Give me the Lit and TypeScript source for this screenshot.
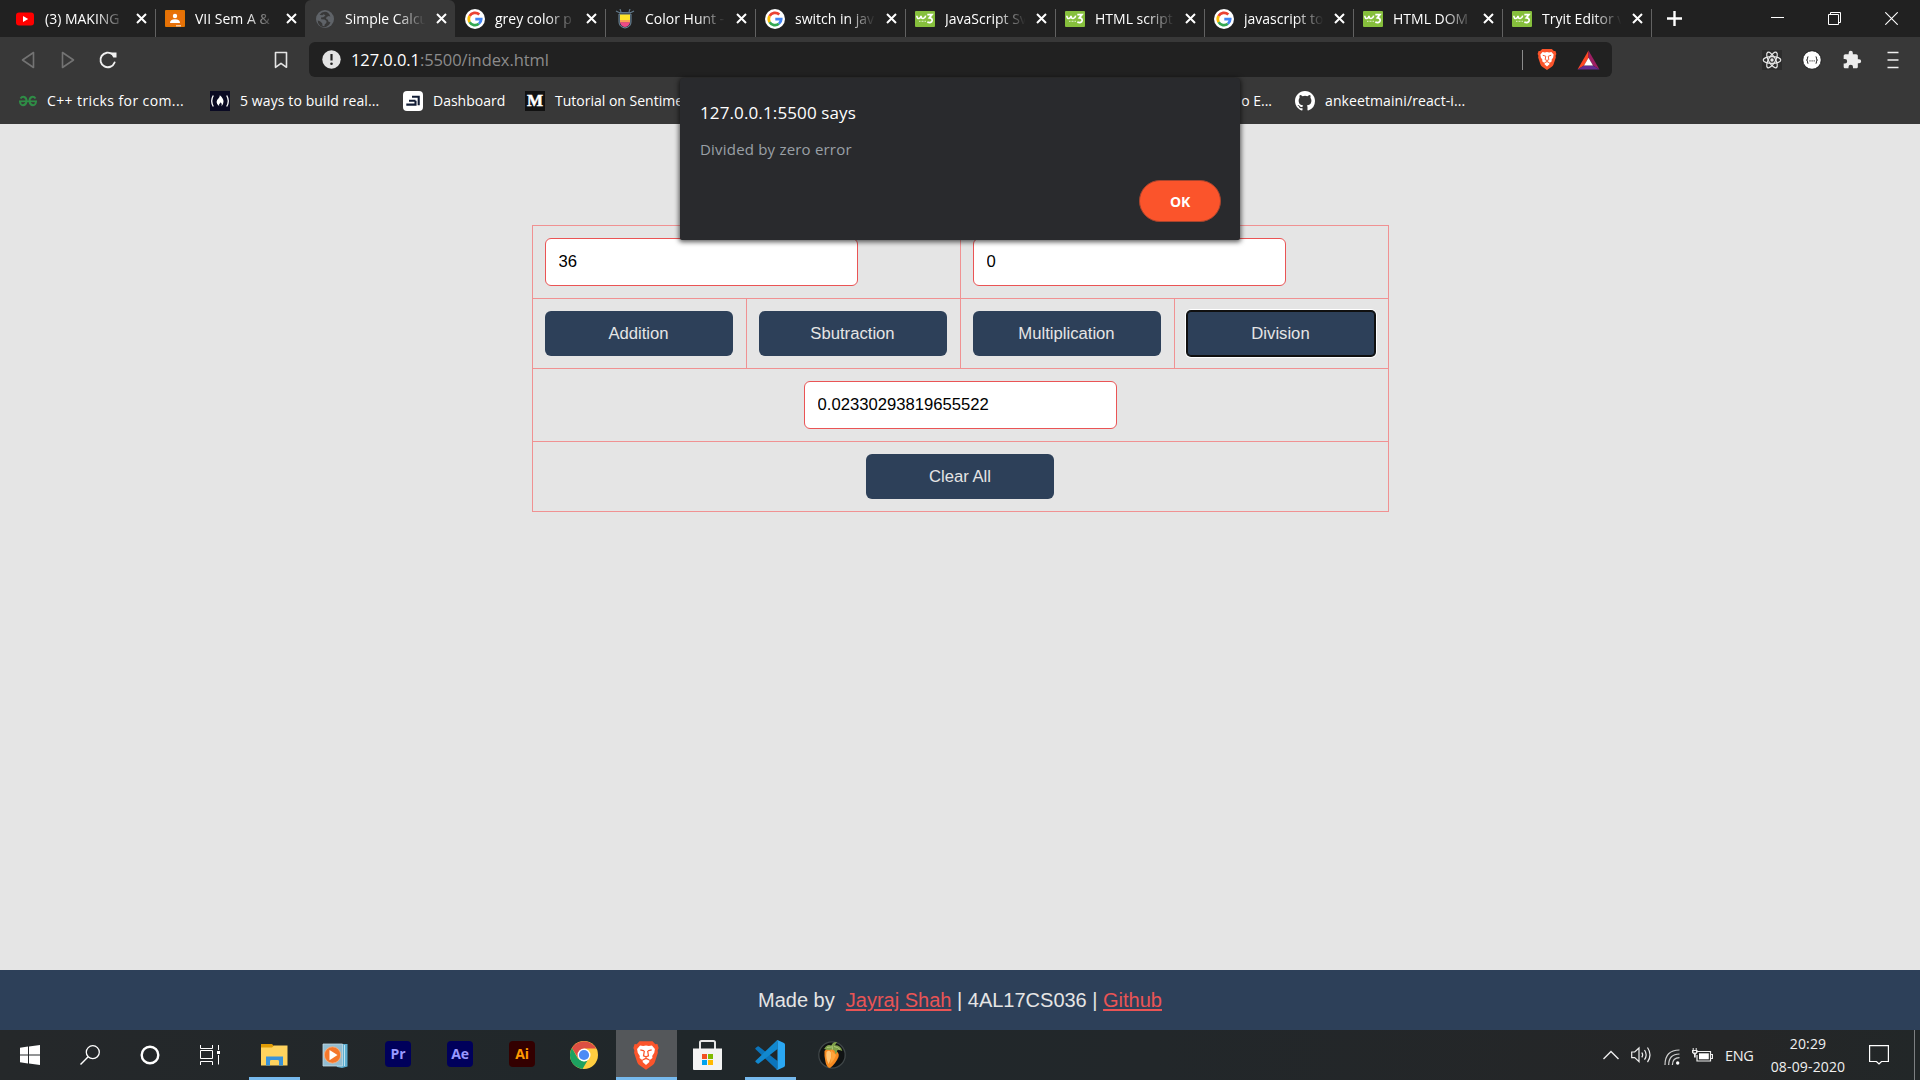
import { LitElement, html, svg, css, nothing } from "lit";
import { customElement, property } from "lit/decorators.js";
import { classMap } from "lit/directives/class-map.js";

const lion = svg`
  <path fill="#fb542b" d="M5 1h10l2.200 2.200 1.600-.2 1 3.200-.8 2 .2 1.600-2.400 7.400q-.5 1.500-1.800 2.400L10 23l-5-3.400q-1.300-.9-1.800-2.400L.8 9.800 1 8.200l-.8-2L1.200 3l1.600.2z"/>
  <path fill="#fff" d="M10 4.200l2.200.4 2.400-.4 2.300 2.700-.5 3-1.600 2.400.2 1.600-2.600 1.900.2 1.200L10 19.300 7.400 17l.2-1.200L5 13.900l.2-1.600-1.600-2.400-.5-3 2.300-2.700 2.400.4z"/>
  <path fill="none" stroke="#fb542b" stroke-width="1" d="M5.600 7.600l3 .9M14.400 7.600l-3 .9M8.700 8.500l-.6 3.700 1.900.8 1.900-.8-.6-3.700M10 13v1.400M7.300 15.500L10 14.200l2.700 1.300"/>`;

const icons: Record<string, unknown> = {
  youtube: svg`<svg width="20" height="20" viewBox="0 0 20 20"><rect x="1" y="3.400" width="18" height="13.200" rx="3" fill="#f00"/><path d="M8 7v6l5.200-3z" fill="#fff"/></svg>`,
  classroom: svg`<svg width="20" height="20" viewBox="0 0 20 20"><rect y="1" width="20" height="17" rx="1" fill="#e37400"/><rect x="1.500" y="2.500" width="17" height="14" fill="#e8710a"/><circle cx="10" cy="7" r="2.200" fill="#fff"/><path d="M5 14q0-3.700 5-3.700t5 3.700z" fill="#fff"/><path d="M11 16h5v1.500h-5z" fill="#f5c9a0"/></svg>`,
  globe: svg`<svg width="20" height="20" viewBox="0 0 20 20"><circle cx="10" cy="10" r="9" fill="#5f6368"/><path fill="#383838" d="M10 2.800Q6.500 3 4.600 5.800l2.600.4 1.500-.9 1.800 1.200-2.200 1.700-2.300.2.200 1.800 3.300.2 2 1.600-.2 2-1.500 1.300-.5 1.900-1.800-.4-.3-2.600-2.200-2-2.300-.8q-.2 3.300 2.200 5.300 2.600 2 6 1.200 3.300-1 4.600-4.400l-2.200-1-.4-1.700-1.800-.8.400-2 2.200-1.100 1.700.600Q13.800 2.900 10 2.800z"/></svg>`,
  google: svg`<svg width="20" height="20" viewBox="0 0 20 20"><circle cx="10" cy="10" r="10" fill="#fff"/><g fill="none" stroke-width="2.700"><path stroke="#ea4335" d="M14.300 5.500A6.200 6.200 0 0 0 4.600 7"/><path stroke="#fbbc05" d="M4.600 7a6.200 6.200 0 0 0 0 6.100"/><path stroke="#34a853" d="M4.600 13.100a6.200 6.200 0 0 0 9.300 1.700"/><path stroke="#4285f4" d="M13.900 14.800A6.200 6.200 0 0 0 16.200 10.100H10.300"/></g></svg>`,
  hunt: svg`<svg width="20" height="20" viewBox="0 0 20 20"><path d="M4 5h12v8q0 5-6 6-6-1-6-6z" fill="#263746" stroke="#718b9c" stroke-width="1"/><path d="M5 5.500h10V12H5z" fill="#ffe52b"/><path d="M5 11h10v2.600H5z" fill="#f9a055"/><path d="M5 13.300h10q-.7 4-5 4.700-4.300-.7-5-4.700z" fill="#ef4b86"/><path d="M1 2l3 1.500M19 2l-3 1.500M5 0l1 3M15 0l-1 3M4 3.500h12" stroke="#61798a" stroke-width="1.200"/></svg>`,
  w3: svg`<svg width="20" height="20" viewBox="0 0 20 20"><rect y="2" width="20" height="16" rx="1" fill="#86bf3c"/><path d="M1.800 6.700q.3 3.200 2.200 2.800T6 6.900q.2 2.900 2.200 2.600t2.500-2.800" fill="none" stroke="#fff" stroke-width="1.600"/><path d="M12.300 5.700h4.600l-2.500 3.100q3 .2 2.700 2.900-.8 2.800-4.800 1.500" fill="none" stroke="#fff" stroke-width="1.800"/><path d="M4 12.300h7" stroke="#cfe6ae" stroke-width="1.200" stroke-dasharray="1 .5"/></svg>`,
  back: svg`<svg width="16" height="20" viewBox="0 0 16 20"><path d="M13.500 2.500v15L2.500 10z" fill="none" stroke="#737373" stroke-width="1.600" stroke-linejoin="round"/></svg>`,
  forward: svg`<svg width="16" height="20" viewBox="0 0 16 20"><path d="M2.500 2.500v15L13.500 10z" fill="none" stroke="#737373" stroke-width="1.600" stroke-linejoin="round"/></svg>`,
  reload: svg`<svg width="20" height="20" viewBox="0 0 20 20"><path d="M14.500 4.400A7.300 7.300 0 1 0 16.600 12.500" fill="none" stroke="#f0f0f0" stroke-width="1.900" stroke-linecap="round"/><path d="M12.500 2.400h6v5.100h-3.200z" fill="#f0f0f0"/></svg>`,
  bookmark: svg`<svg width="14" height="18" viewBox="0 0 14 18"><path d="M1.500 1.500h11v14.800L7 12.300l-5.500 4z" fill="none" stroke="#e4e4e4" stroke-width="1.600" stroke-linejoin="round"/></svg>`,
  info: svg`<svg width="19" height="19" viewBox="0 0 19 19"><circle cx="9.500" cy="9.500" r="9.200" fill="#e3e3e3"/><path d="M9.500 4v6.500" stroke="#222" stroke-width="2.200"/><circle cx="9.500" cy="13.700" r="1.300" fill="#222"/></svg>`,
  brave: svg`<svg width="20" height="23" viewBox="0 0 20 24">${lion}</svg>`,
  braveBig: svg`<svg width="26" height="31" viewBox="0 0 20 24">${lion}</svg>`,
  bat: svg`<svg width="23" height="20" viewBox="0 0 23 20"><path d="M11.500.5L.5 19.500l6.500-4 4.500-7.800z" fill="#ff4724"/><path d="M11.500.5l11 19-6.500-4-4.500-7.800z" fill="#9e1f63"/><path d="M.5 19.500h22l-6.500-4H7z" fill="#662d91"/><path d="M11.500 7.700L16 15.500H7z" fill="#fff"/></svg>`,
  react: svg`<svg width="20" height="20" viewBox="0 0 20 20"><rect width="20" height="20" fill="#2c2c2c"/><g fill="none" stroke="#e6e6e6" stroke-width="1.200"><ellipse cx="10" cy="10" rx="8.800" ry="3.400"/><ellipse cx="10" cy="10" rx="8.800" ry="3.400" transform="rotate(60 10 10)"/><ellipse cx="10" cy="10" rx="8.800" ry="3.400" transform="rotate(120 10 10)"/></g><circle cx="10" cy="10" r="1.700" fill="#e6e6e6"/></svg>`,
  json: svg`<svg width="20" height="20" viewBox="0 0 20 20"><circle cx="10" cy="10" r="9.300" fill="#fff" stroke="#1b1b1b" stroke-width="1"/><path d="M6.500 6.800q-1.200 0-1 1.500T4.100 10q1.600.2 1.400 1.700t1 1.500M13.500 6.800q1.200 0 1 1.500t1.400 1.700q-1.600.2-1.400 1.700t-1 1.500" fill="none" stroke="#444" stroke-width="1.100"/><path d="M7.400 10.800h5.400" stroke="#555" stroke-width="1.200" stroke-dasharray="1.200 .9"/></svg>`,
  puzzle: svg`<svg width="20" height="20" viewBox="0 0 24 24"><path fill="#ececec" d="M20.500 11H19V7c0-1.100-.9-2-2-2h-4V3.500a2.500 2.500 0 0 0-5 0V5H4c-1.100 0-1.990.9-1.990 2v3.800H3.500a2.700 2.700 0 0 1 0 5.400H2V20c0 1.100.9 2 2 2h3.800v-1.500a2.700 2.700 0 0 1 5.400 0V22H17c1.100 0 2-.9 2-2v-4h1.500a2.500 2.500 0 0 0 0-5z"/></svg>`,
  menu: svg`<svg width="12" height="18" viewBox="0 0 12 18"><path d="M.5 1.500h11M.5 9h11M.5 16.500h11" stroke="#f0f0f0" stroke-width="1.600"/></svg>`,
  gfg: svg`<svg width="20" height="20" viewBox="0 0 20 20"><g fill="none" stroke="#2f8d46" stroke-width="1.900"><path d="M2.500 7.600Q4 5.300 6.300 6 8.800 7 8.500 10.500 8 14 5 14.200 2.200 14 2 10.500"/><path d="M17.500 7.600Q16 5.300 13.700 6 11.200 7 11.500 10.500 12 14 15 14.200q2.800-.2 3-3.700"/><path d="M1 10.300h18" stroke-width="1.700"/></g></svg>`,
  fcc: svg`<svg width="20" height="20" viewBox="0 0 20 20"><rect width="20" height="20" fill="#0a0a23"/><path d="M3.300 4.500q-3.200 5.500 0 11M16.700 4.500q3.200 5.500 0 11" fill="none" stroke="#fff" stroke-width="1.300"/><path fill="#fff" d="M9.800 4.200q3.800 3.200 3.700 6.400 0 2.600-2 4.600.8-2.600-.7-4-.6 1.300-1.500 1.700-.6 1 0 2.300-2.700-1.400-2.700-4.200 0-2.300 2-3.800 1.200-1.100 1.200-3z"/></svg>`,
  dash: svg`<svg width="20" height="20" viewBox="0 0 20 20"><rect width="20" height="20" rx="4" fill="#fff"/><path d="M9 5.800h6.700v8.400M6 9.700h6.500M3.300 13.600h9.200V9.700" fill="none" stroke="#111c35" stroke-width="2.100"/></svg>`,
  medium: html`<span class="medium">M</span>`,
  github: svg`<svg width="20" height="20" viewBox="0 0 16 16"><path fill="#fff" d="M8 0C3.580 0 0 3.580 0 8c0 3.540 2.290 6.530 5.470 7.590.4.070.55-.17.55-.38 0-.19-.01-.82-.01-1.490-2.010.37-2.530-.49-2.690-.94-.09-.23-.48-.94-.82-1.130-.28-.15-.68-.52-.01-.53.63-.01 1.080.58 1.230.82.72 1.210 1.870.87 2.330.66.070-.52.280-.87.510-1.070-1.780-.2-3.640-.89-3.640-3.950 0-.87.310-1.590.82-2.150-.08-.2-.36-1.020.08-2.120 0 0 .67-.21 2.200.82a7.640 7.640 0 0 1 4 0c1.530-1.040 2.200-.82 2.200-.82.44 1.100.16 1.920.08 2.120.51.560.82 1.270.82 2.150 0 3.070-1.870 3.750-3.650 3.950.29.25.54.73.54 1.480 0 1.070-.01 1.930-.01 2.200 0 .21.150.46.550.38A8.010 8.010 0 0 0 16 8c0-4.420-3.580-8-8-8z"/></svg>`,
  windows: svg`<svg width="20" height="20" viewBox="0 0 20 20"><path fill="#fff" d="M0 2.700l8-1.100v7.900H0zM9 1.500L20 0v9.500H9zM0 10.500h8v7.900l-8-1.100zM9 10.500h11V20L9 18.500z"/></svg>`,
  search: svg`<svg width="20" height="20" viewBox="0 0 20 20"><circle cx="12.800" cy="7.200" r="6.500" fill="none" stroke="#fff" stroke-width="1.300"/><path d="M8.200 11.800L.5 19.500" stroke="#fff" stroke-width="1.400"/></svg>`,
  cortana: svg`<svg width="20" height="20" viewBox="0 0 20 20"><circle cx="10" cy="10" r="8.300" fill="none" stroke="#fff" stroke-width="2.400"/></svg>`,
  taskview: svg`<svg width="20" height="20" viewBox="0 0 20 20"><g fill="none" stroke="#fff"><path d="M.5 0v3.500h12V0M.5 20v-3.500h12V20M.5 5.500h12v8H.500z"/><path d="M18.500 0v5M18.500 10v9.500"/></g><path d="M17 6h3v3h-3z" fill="#fff"/></svg>`,
  explorer: svg`<svg width="27" height="24" viewBox="0 0 27 24"><path d="M0 1h11l2 2v3H0z" fill="#e09b05"/><path d="M0 4.500h11l2-2h13.500V22.500H0z" fill="#ffd35e"/><path d="M5 13.500h17v9h-4v-4.200q0-1.300-1.300-1.300h-6.400Q9 17 9 18.300v4.200H5z" fill="#3a93d9"/></svg>`,
  player: svg`<svg width="26" height="25" viewBox="0 0 26 25"><path d="M6 1h19.500v22.500L20 25l-5-1z" fill="#5eaed0"/><path d="M22.500 2v21" stroke="#c1e5f2"/><path d="M1 1h19.500v22H1z" fill="#93bdd1" stroke="#c3dbe5" stroke-width=".8"/><circle cx="10.500" cy="12" r="8.200" fill="#f4772b" stroke="#f9b98b" stroke-width=".8"/><path d="M7.500 7v10.200l8-5.100z" fill="#fff"/></svg>`,
  chrome: svg`<svg width="28" height="28" viewBox="0 0 28 28"><circle cx="14" cy="14" r="14" fill="#ffcd40"/><path d="M1.900 7A14 14 0 0 1 26.100 7.500H14L8.400 17.300z" fill="#dd4f43"/><path d="M1.900 7l6 10.500L14 20.500l3.500-1L12.500 28A14 14 0 0 1 1.900 7z" fill="#1da160"/><circle cx="14" cy="14" r="6.500" fill="#fff"/><circle cx="14" cy="14" r="5.100" fill="#4c8bf5"/></svg>`,
  store: svg`<svg width="29" height="30" viewBox="0 0 29 30"><path d="M7 9V2.500Q7 1 8.500 1h12Q22 1 22 2.500V9" fill="none" stroke="#e6e6e6" stroke-width="2"/><path d="M0 8.500h29V29q0 1-1 1H1q-1 0-1-1z" fill="#f3f3f3"/><path d="M9 14h5v5H9z" fill="#f25022"/><path d="M15 14h5v5h-5z" fill="#7fba00"/><path d="M9 20h5v5H9z" fill="#00a4ef"/><path d="M15 20h5v5h-5z" fill="#ffb900"/></svg>`,
  vscode: svg`<svg width="30" height="30" viewBox="0 0 30 30"><path d="M.600 9.300Q0 8.700.600 8.100L2.500 6.600q.700-.500 1.300 0L22.500 21v8.600q-.700-.100-1.300-.700z" fill="#0b74bb"/><path d="M.600 20.700Q0 21.300.600 21.900l1.900 1.500q.700.500 1.300 0L22.500 9V.4q-.700.100-1.300.700z" fill="#1188cf"/><path d="M21.200.800Q22 0 23 .300L29 3.100q1 .500 1 1.600v20.600q0 1.100-1 1.600l-6 2.800q-1 .300-1.800-.5 1.300.3 1.300-1.200V2q0-1.500-1.300-1.200z" fill="#2aa7f3"/></svg>`,
  fl: svg`<svg width="28" height="28" viewBox="0 0 28 28"><circle cx="14" cy="14" r="13.200" fill="#101314" stroke="#3f4648" stroke-width="1.300"/><path d="M6.500 10Q10 5.500 16 8.500q6 3 4.500 7.500-3 7-8.500 11-3.500-.5-4.500-6-1.500-6-1-11z" fill="#f78a20"/><path d="M8.500 11q3-2.500 4.500.5 1 6-2.500 11.500Q7.500 17 8.500 11z" fill="#ffc677"/><path d="M13 9q1 6-1 14 4-3 6-9z" fill="#ffa63c"/><path d="M6.500 7.500Q9 2.500 13.500 4.500q1-4 5.500-3.500l-2 3.300q6 0 7.300 5.700-3.800-1.800-5.300-.5.500 3-2 3.500.5-4.500-3.500-4.500-3.500 1.500-8-1z" fill="#7fa04a"/><path d="M14 4.500l.5 4M9 6.500l4.500-.5M16 5.500q4 .5 6 3" stroke="#bcd184" stroke-width=".8" fill="none"/></svg>`,
  chevron: svg`<svg width="16" height="10" viewBox="0 0 16 10"><path d="M.5 9L8 1.500 15.500 9" fill="none" stroke="#eee" stroke-width="1.400"/></svg>`,
  speaker: svg`<svg width="21" height="18" viewBox="0 0 21 18"><g fill="none" stroke="#eee" stroke-width="1.200"><path d="M.7 6h3L8 2v13.600l-4.300-4H.7z"/><path d="M10.800 6.500q1.700 2.400 0 4.800"/><path d="M13.500 4q3.300 4.800 0 9.700"/><path d="M16.500 1.500q5 7.400 0 14.700"/></g></svg>`,
  wifi: svg`<svg width="16" height="16" viewBox="0 0 16 16"><g fill="none" stroke="#d0d0d0" stroke-width="1.200"><path d="M1 16Q1 1 15.500 1"/><path d="M4.700 16Q4.700 5 15.500 5"/><path d="M8.400 16q0-7.300 7.100-7.300"/></g><circle cx="13.700" cy="14" r="1.700" fill="#fff"/></svg>`,
  battery: svg`<svg width="21" height="15" viewBox="0 0 21 15"><path d="M5 3.500h13.500v9.500H5V7M19 6.500h1.500v4H19" fill="none" stroke="#eee" stroke-width="1.200"/><path d="M7 5.300h9.800v6H7z" fill="#fff"/><path d="M0 2h5.500v2.700L3.700 6.500v3H2v-3L0 4.700zM.7 0h1v2h-1zM3.700 0h1v2h-1z" fill="#eee"/><path d="M1.500 3h2.500v1.500H1.500z" fill="#222"/></svg>`,
  notice: svg`<svg width="20" height="20" viewBox="0 0 20 20"><path d="M.6.600h18.800v15.900h-6.900L10 19l-2.500-2.500H.6z" fill="none" stroke="#fff" stroke-width="1.200"/></svg>`,
};

const close = svg`<svg width="11" height="11" viewBox="0 0 11 11"><path d="M1 1l9 9M10 1l-9 9" stroke="#fff" stroke-width="2"/></svg>`;

const tabs: { icon: string; title: string; active?: boolean }[] = [
  { icon: "youtube", title: "(3) MAKING" },
  { icon: "classroom", title: "VII Sem A &" },
  { icon: "globe", title: "Simple Calcu", active: true },
  { icon: "google", title: "grey color p" },
  { icon: "hunt", title: "Color Hunt -" },
  { icon: "google", title: "switch in jav" },
  { icon: "w3", title: "JavaScript Sv" },
  { icon: "w3", title: "HTML script" },
  { icon: "google", title: "javascript to" },
  { icon: "w3", title: "HTML DOM" },
  { icon: "w3", title: "Tryit Editor v" },
];

const ui = css`
  * { box-sizing: border-box; }
  svg { display: block; flex: none; }
  :host { box-sizing: border-box; flex: none; font-family: "Open Sans", "Noto Sans", sans-serif; }
`;

@customElement("tab-strip")
class TabStrip extends LitElement {
  static styles = [ui, css`
    :host { display: flex; height: 37px; background: #212121; padding-left: 5px; }
    .tabs { display: grid; grid-template-columns: repeat(7, 150px) repeat(4, 149px); }
    .tab { display: flex; align-items: center; position: relative; padding: 0 8px 0 10px; min-width: 0; }
    .tab.active { background: #383838; border-radius: 6px 6px 0 0; }
    .rule { position: absolute; right: -1px; top: 9px; bottom: 0; width: 1px; background: #626262; }
    .title { flex: 1; min-width: 0; margin: 0 8px 0 10px; white-space: nowrap; color: #fff;
      font-size: 14px; line-height: 22px; letter-spacing: 0;
      -webkit-mask-image: linear-gradient(90deg, #000 62%, transparent 97%); }
    .plus { margin: 11px 0 0 16px; }
    .controls { display: flex; align-items: center; margin-left: auto; padding-right: 22px; gap: 44px; }
  `];
  render() {
    return html`
      <div class="tabs">
        ${tabs.map((t, i) => html`
          <div class=${classMap({ tab: true, active: !!t.active })}>
            ${icons[t.icon]}<span class="title">${t.title}</span>${close}
            ${i === 1 || i === 2 ? nothing : html`<i class="rule"></i>`}
          </div>`)}
      </div>
      <svg class="plus" width="15" height="15" viewBox="0 0 15 15"><path d="M7.500 0v15M0 7.500h15" stroke="#fff" stroke-width="2.400"/></svg>
      <div class="controls">
        <svg width="13" height="13" viewBox="0 0 13 13"><path d="M0 5.500h13" stroke="#fff"/></svg>
        <svg width="13" height="13" viewBox="0 0 13 13"><path d="M.5 2.500h10v10H.5zM2.500 2.500v-2h10v10h-2" fill="none" stroke="#fff"/></svg>
        <svg width="13" height="13" viewBox="0 0 13 13"><path d="M.3.300l12.400 12.400M12.700.300L.3 12.700" stroke="#fff" stroke-width="1.100"/></svg>
      </div>`;
  }
}

@customElement("tool-bar")
class ToolBar extends LitElement {
  static styles = [ui, css`
    :host { display: flex; align-items: center; height: 40px; background: #383838; padding: 5px 21px 0 20px; }
    .nav { display: flex; align-items: center; width: 289px; }
    .nav svg:nth-child(2) { margin-left: 24px; }
    .nav svg:nth-child(3) { margin-left: 22px; }
    .nav svg:nth-child(4) { margin-left: 156px; }
    .address { display: flex; align-items: center; width: 1303px; height: 35px; border-radius: 6px; background: #212121; padding: 0 12px 0 13px; }
    .url { margin-left: 10px; font-size: 16.5px; line-height: 24px; color: #fff; white-space: nowrap; letter-spacing: -0.08px; }
    .path { color: #8c8c8c; }
    .rule { width: 1px; height: 20px; background: #8b8b8b; margin-left: auto; }
    .brave { margin: 0 20px 0 14px; }
    .ext { display: flex; align-items: center; margin-left: auto; gap: 20px; }
    .menu { margin-left: 5px; }
  `];
  render() {
    return html`
      <div class="nav">${icons.back}${icons.forward}${icons.reload}${icons.bookmark}</div>
      <div class="address">
        ${icons.info}<span class="url">127.0.0.1<span class="path">:5500/index.html</span></span>
        <i class="rule"></i><span class="brave">${icons.brave}</span>${icons.bat}
      </div>
      <div class="ext">${icons.react}${icons.json}${icons.puzzle}<span class="menu">${icons.menu}</span></div>`;
  }
}

@customElement("bookmark-bar")
class BookmarkBar extends LitElement {
  static styles = [ui, css`
    :host { display: grid; grid-template-columns: 192px 193px 122px 670px 100px 300px; align-items: center; height: 47px; background: #383838; padding-left: 18px; }
    .item { display: flex; align-items: center; gap: 10px; color: #fff; font-size: 14px; line-height: 22px; white-space: nowrap; }
    .item.wide { letter-spacing: 0.4px; gap: 9px; }
    .item.mid { letter-spacing: 0.1px; }
    .item.tail { justify-content: flex-end; padding-right: 23px; }
    .medium { width: 20px; height: 20px; background: #111; display: grid; place-items: center; line-height: 20px;
      font-family: "Liberation Serif", serif; font-weight: 700; font-size: 17px; -webkit-text-stroke: 0.5px #fff; }
  `];
  render() {
    return html`
      <span class="item wide">${icons.gfg}<span>C++ tricks for com...</span></span>
      <span class="item mid">${icons.fcc}<span>5 ways to build real...</span></span>
      <span class="item">${icons.dash}<span>Dashboard</span></span>
      <span class="item">${icons.medium}<span>Tutorial on Sentime</span></span>
      <span class="item tail">o E...</span>
      <span class="item mid">${icons.github}<span>ankeetmaini/react-i...</span></span>`;
  }
}

@customElement("calc-page")
class CalcPage extends LitElement {
  @property() first = "36";
  @property() second = "0";
  @property() result = "0.02330293819655522";
  static styles = [ui, css`
    :host { display: flex; flex-direction: column; align-items: center; height: 906px; background: #e5e5e5; padding-top: 101px; font-family: "Liberation Sans", Arial, sans-serif; }
    .grid { display: grid; grid-template-columns: repeat(4, 214px); grid-template-rows: 73px 70px 73px 70px; border: solid #f09192; border-width: 1px 0 0 1px; }
    .cell { border: solid #f09192; border-width: 0 1px 1px 0; padding: 12px; }
    .half { grid-column: span 2; }
    .full { grid-column: span 4; display: flex; justify-content: center; }
    .field { display: block; width: 313px; height: 48px; margin: 0; border: 1px solid #ea5455; border-radius: 6px; background: #fff; color: #000; padding: 0 13px; font: 16.67px "Liberation Sans", Arial, sans-serif; outline: none; }
    .btn { display: block; width: 188px; height: 45px; margin: 0; border: 0; border-radius: 6px; background: #2d4059; color: #e5e5e5; padding: 0; font: 16.67px "Liberation Sans", Arial, sans-serif; }
    .btn.focused { border-radius: 4px; box-shadow: 0 0 0 1px #101010, inset 0 0 0 1px #101010, 0 0 0 2px #fff; }
    .footer { margin-top: auto; width: 100%; height: 60px; background: #2d4059; color: #e5e5e5; font-size: 20px; line-height: 60px; text-align: center; }
    .link { color: #ea5455; text-decoration: underline; text-decoration-thickness: 2px; text-underline-offset: 2px; }
  `];
  render() {
    return html`
      <div class="grid">
        <div class="cell half"><input class="field" .value=${this.first}></div>
        <div class="cell half"><input class="field" .value=${this.second}></div>
        <div class="cell"><button class="btn">Addition</button></div>
        <div class="cell"><button class="btn">Sbutraction</button></div>
        <div class="cell"><button class="btn">Multiplication</button></div>
        <div class="cell"><button class="btn focused">Division</button></div>
        <div class="cell full"><input class="field" .value=${this.result}></div>
        <div class="cell full"><button class="btn">Clear All</button></div>
      </div>
      <div class="footer">Made by&nbsp; <a class="link">Jayraj Shah</a> | 4AL17CS036 | <a class="link">Github</a></div>`;
  }
}

@customElement("alert-dialog")
class AlertDialog extends LitElement {
  static styles = [ui, css`
    :host { display: flex; flex-direction: column; width: 560px; height: 162px; background: #292a2d; border-radius: 4px 4px 2px 2px; padding: 23px 19px 18px 20px; box-shadow: 0 1px 5px 1px rgba(0, 0, 0, 0.65); }
    .title { color: #fff; font-size: 17px; line-height: 24px; letter-spacing: 0.12px; }
    .text { margin-top: 12px; color: #9aa0a6; font-size: 15px; line-height: 24px; letter-spacing: 0.2px; }
    .ok { margin: auto 0 0 auto; width: 82px; height: 42px; border: 1px solid #a9442d; border-radius: 21px; background: #fb542b; color: #fff; padding: 0; font: 700 14px "Open Sans", sans-serif; letter-spacing: -0.2px; }
  `];
  render() {
    return html`<div class="title">127.0.0.1:5500 says</div>
      <div class="text">Divided by zero error</div>
      <button class="ok">OK</button>`;
  }
}

@customElement("task-bar")
class TaskBar extends LitElement {
  static styles = [ui, css`
    :host { display: flex; height: 50px; background: linear-gradient(90deg, #25282a, #20272a 35%, #22272a 60%, #252627 90%, #222728); color: #f0f0f0; }
    .slot { width: 60px; display: grid; place-items: center; }
    .apps { display: flex; margin-left: 3px; }
    .app { width: 62px; display: grid; place-items: center; position: relative; }
    .app.open::after { content: ""; position: absolute; left: 6px; right: 5px; bottom: 0; height: 3px; background: #76b9ed; }
    .app.current { background: #54575a; margin-left: 1px; width: 61px; }
    .app.current::after { left: 0; right: 0; }
    .app.nudge { padding-right: 2px; }
    .adobe { width: 26px; height: 26px; border-radius: 4px; display: grid; place-items: center; font-weight: 700; font-size: 14px; line-height: 24px; letter-spacing: -0.1px; margin-top: -2px; }
    .pr, .ae { background: #00005b; color: #9999ff; }
    .ai { background: #330000; color: #ff9a00; }
    .tray { display: flex; align-items: center; margin-left: auto; }
    .speaker { margin-left: 12px; }
    .wifi { margin-left: 12px; margin-top: 3px; }
    .battery { margin-left: 12px; }
    .lang { margin-left: 12px; width: 29px; font-size: 14.5px; letter-spacing: -0.4px; }
    .clock { margin-left: 13px; width: 84px; font-size: 14px; line-height: 23px; text-align: center; letter-spacing: 0.15px; position: relative; left: -1px; }
    .notice { margin-left: 18px; }
    .edge { width: 1px; height: 50px; background: #7d8082; margin: 0 5px 0 25px; }
  `];
  render() {
    return html`
      ${["windows", "search", "cortana", "taskview"].map((n) => html`<span class="slot">${icons[n]}</span>`)}
      <div class="apps">
        <span class="app open">${icons.explorer}</span>
        <span class="app nudge">${icons.player}</span>
        <span class="app"><span class="adobe pr">Pr</span></span>
        <span class="app"><span class="adobe ae">Ae</span></span>
        <span class="app"><span class="adobe ai">Ai</span></span>
        <span class="app">${icons.chrome}</span>
        <span class="app open current nudge">${icons.braveBig}</span>
        <span class="app nudge">${icons.store}</span>
        <span class="app open">${icons.vscode}</span>
        <span class="app">${icons.fl}</span>
      </div>
      <div class="tray">
        <span>${icons.chevron}</span><span class="speaker">${icons.speaker}</span>
        <span class="wifi">${icons.wifi}</span><span class="battery">${icons.battery}</span>
        <span class="lang">ENG</span>
        <span class="clock">20:29<br>08-09-2020</span>
        <span class="notice">${icons.notice}</span><i class="edge"></i>
      </div>`;
  }
}

@customElement("app-root")
class AppRoot extends LitElement {
  static styles = css`
    :host { display: flex; flex-direction: column; position: relative; width: 1920px; height: 1080px; overflow: hidden; }
    .dialog { position: absolute; left: 680px; top: 78px; }
  `;
  render() {
    return html`<tab-strip></tab-strip><tool-bar></tool-bar><bookmark-bar></bookmark-bar>
      <calc-page></calc-page><task-bar></task-bar>
      <alert-dialog class="dialog"></alert-dialog>`;
  }
}
